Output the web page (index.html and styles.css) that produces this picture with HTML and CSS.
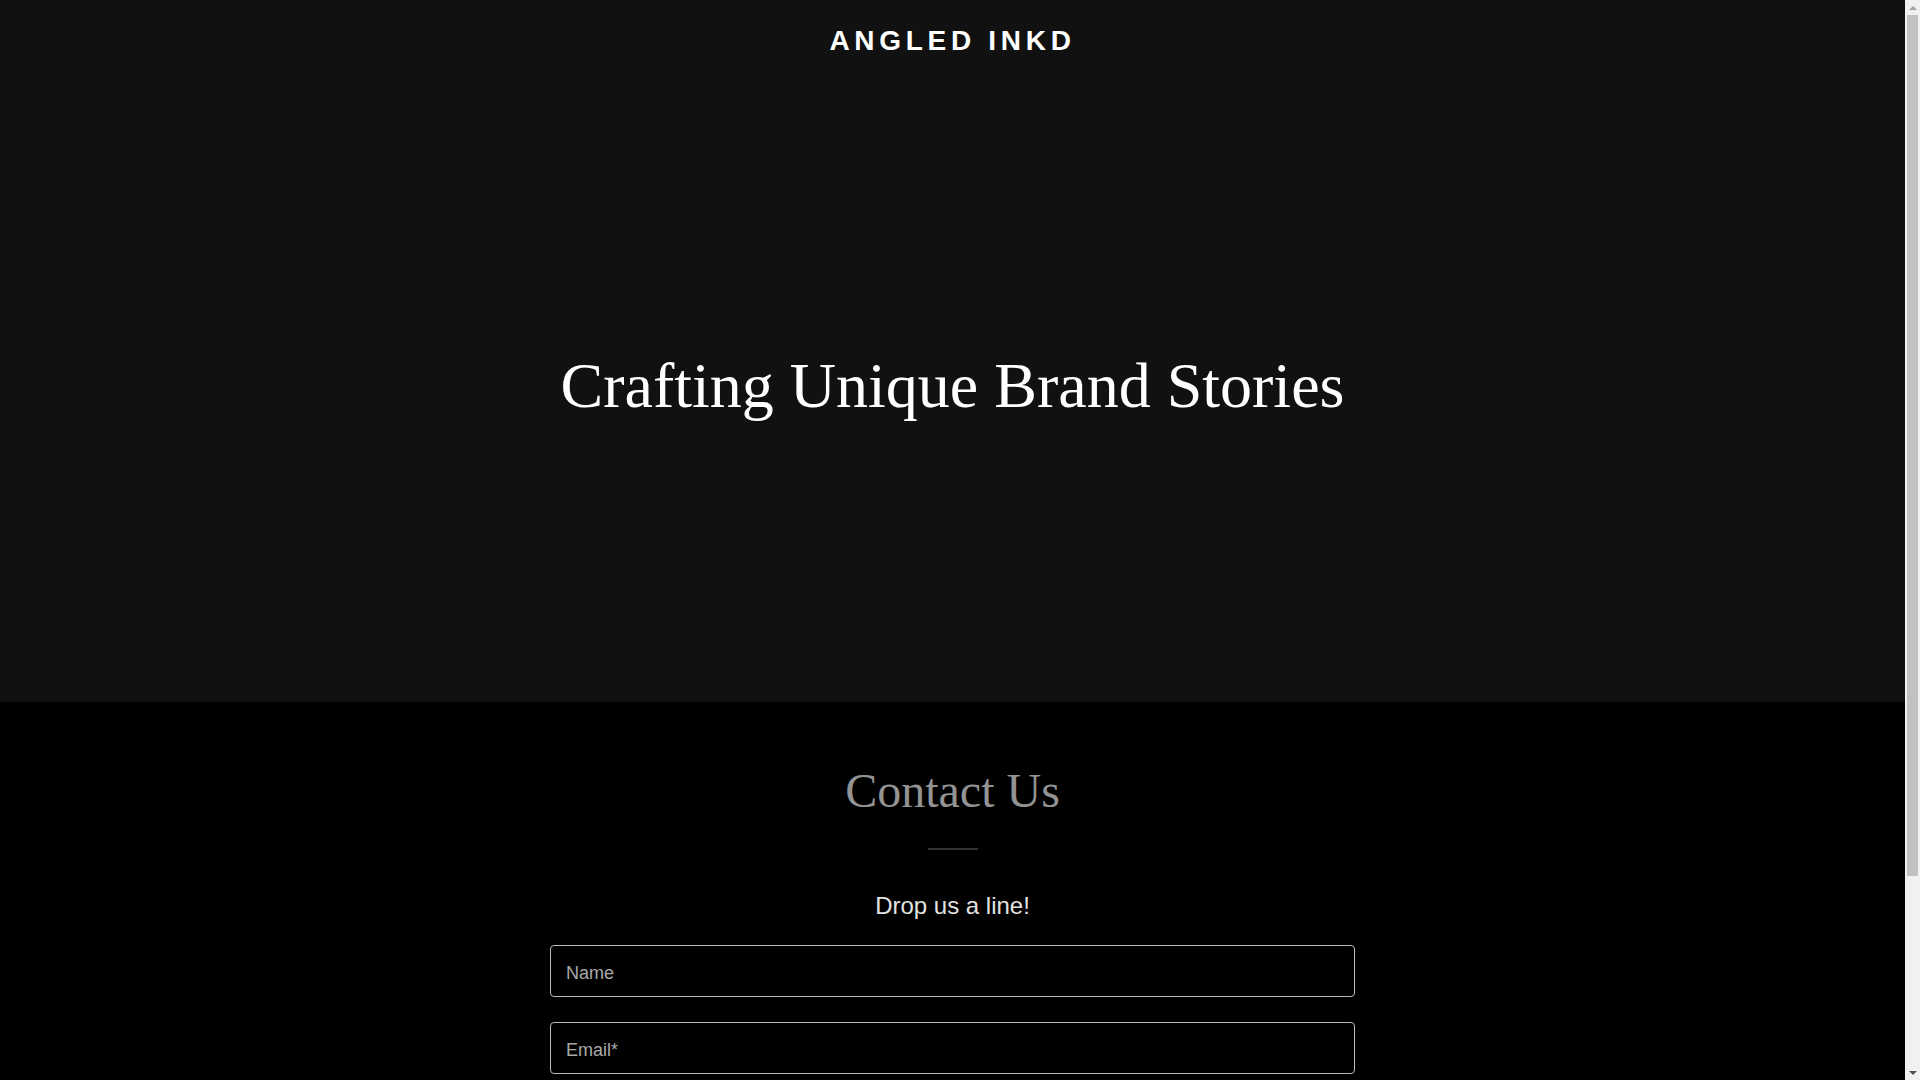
FILE: index.html
```html
<!DOCTYPE html>
<html lang="en">
<head>
<meta charset="utf-8">
<title>Angled Inkd</title>
<link rel="stylesheet" href="styles.css">
</head>
<body>
<div class="page">
  <section class="hero">
    <header class="site-header">
      <div class="brand">ANGLED INKD</div>
    </header>
    <h1 class="hero-title">Crafting Unique Brand Stories</h1>
  </section>
  <section class="contact">
    <h2 class="contact-title">Contact Us</h2>
    <div class="divider"></div>
    <p class="contact-sub">Drop us a line!</p>
    <form class="contact-form">
      <input class="field" type="text" placeholder="Name">
      <input class="field" type="email" placeholder="Email*">
      <textarea class="field area" placeholder="Message"></textarea>
      <button class="send" type="button">SEND</button>
    </form>
  </section>
</div>
<div class="scrollbar" aria-hidden="true">
  <div class="sb-arrow sb-up"></div>
  <div class="sb-track"><div class="sb-thumb"></div></div>
  <div class="sb-arrow sb-down"></div>
</div>
</body>
</html>
```
FILE: styles.css
```css
html, body {
  margin: 0;
  padding: 0;
  background: #000;
}
body {
  font-family: "Liberation Sans", Arial, sans-serif;
  color: #fff;
  overflow: hidden;
}
.page {
  margin-right: 15px;
}
.hero {
  background: #111111;
  height: 702px;
  box-sizing: border-box;
  padding-top: 24px;
}
.site-header {
  display: flex;
  justify-content: center;
}
.brand {
  font-family: "Liberation Sans", Arial, sans-serif;
  font-weight: 700;
  font-size: 28px;
  line-height: 33.6px;
  letter-spacing: 4.7px;
  color: #fff;
}
.hero-title {
  margin: 290px 0 0;
  text-align: center;
  font-family: "Liberation Serif", "Times New Roman", serif;
  font-weight: 400;
  font-size: 64px;
  line-height: 76.8px;
  color: #fff;
}
.contact {
  background: #000;
  padding: 59px 0 120px;
  display: flex;
  flex-direction: column;
  align-items: center;
}
.contact-title {
  margin: 0;
  font-family: "Liberation Serif", "Times New Roman", serif;
  font-weight: 400;
  font-size: 48px;
  line-height: 60px;
  color: #939393;
}
.divider {
  width: 50px;
  height: 2px;
  background: #333;
  margin-top: 27px;
}
.contact-sub {
  margin: 38px 0 0;
  font-size: 24px;
  line-height: 36px;
  color: #e2e2e2;
}
.contact-form {
  margin-top: 21px;
  width: 805px;
  display: flex;
  flex-direction: column;
  gap: 25px;
}
.field {
  box-sizing: border-box;
  width: 100%;
  height: 52px;
  background: #000;
  border: 1px solid #b9b9b9;
  border-radius: 4px;
  padding: 4px 15px 0;
  font-family: "Liberation Sans", Arial, sans-serif;
  font-size: 18px;
  color: #fff;
  outline: none;
}
.field::placeholder {
  color: #a8a8a8;
}
.area {
  height: 160px;
  padding-top: 15px;
  resize: none;
}
.send {
  height: 56px;
  background: #fff;
  color: #000;
  border: none;
  border-radius: 4px;
  font-family: "Liberation Sans", Arial, sans-serif;
  font-weight: 700;
  font-size: 16px;
  letter-spacing: 2px;
}
.scrollbar {
  position: fixed;
  top: 0;
  right: 0;
  width: 15px;
  height: 100vh;
  background: #f1f1f1;
  display: flex;
  flex-direction: column;
}
.sb-arrow {
  height: 15px;
  display: flex;
  align-items: center;
  justify-content: center;
}
.sb-up::before,
.sb-down::before {
  content: "";
  width: 0;
  height: 0;
  border-left: 4px solid transparent;
  border-right: 4px solid transparent;
}
.sb-up::before {
  border-bottom: 4px solid #a3a3a3;
}
.sb-down::before {
  border-top: 4px solid #505050;
}
.sb-track {
  flex: 1;
  padding: 0 2px;
}
.sb-thumb {
  height: 82%;
  background: #c1c1c1;
}
```
